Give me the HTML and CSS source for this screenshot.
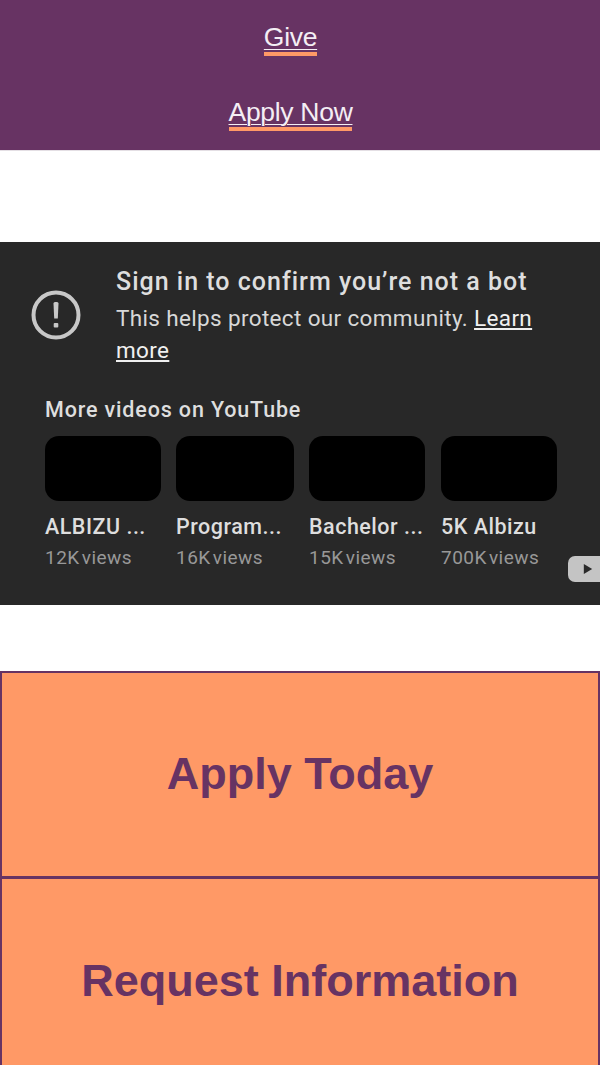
FILE: index.html
```html
<!DOCTYPE html>
<html lang="en">
<head>
    <meta charset="UTF-8">
    <meta name="viewport" content="width=device-width, initial-scale=1.0">
    <title>Albizu</title>
    <link rel="stylesheet" href="styles.css">
</head>
<body>
    <div class="top-links">
        <a class="top-link" href="#">Give</a>
        <a class="top-link" href="#">Apply Now</a>
    </div>

    <div class="video-box">
        <div class="bot-msg">
            <svg class="alert-icon" viewBox="0 0 50 50" aria-hidden="true">
                <circle cx="25" cy="25" r="22.5" fill="none" stroke="#c8c8c8" stroke-width="4"/>
                <path d="M22.5 13.5a1.5 1.5 0 0 1 1.5-1.5h2a1.5 1.5 0 0 1 1.5 1.5l-.7 15h-3.6z" fill="#c8c8c8"/>
                <rect x="22.7" y="33" width="4.6" height="4.6" rx="1" fill="#c8c8c8"/>
            </svg>
            <div class="bot-text">
                <p class="bot-title">Sign in to confirm you’re not a bot</p>
                <p class="bot-sub">This helps protect our community. <a href="#">Learn</a> <a href="#">more</a></p>
            </div>
        </div>

        <p class="more-title">More videos on YouTube</p>
        <div class="video-row">
            <div class="video-card">
                <div class="thumb"></div>
                <p class="video-name">ALBIZU ...</p>
                <p class="video-views">12K views</p>
            </div>
            <div class="video-card card-wide">
                <div class="thumb"></div>
                <p class="video-name">Program...</p>
                <p class="video-views">16K views</p>
            </div>
            <div class="video-card">
                <div class="thumb"></div>
                <p class="video-name">Bachelor ...</p>
                <p class="video-views">15K views</p>
            </div>
            <div class="video-card card-last">
                <div class="thumb"></div>
                <p class="video-name">5K Albizu</p>
                <p class="video-views">700K views</p>
            </div>
        </div>

        <div class="yt-mark">
            <svg viewBox="0 0 12 14" aria-hidden="true"><path d="M1 1l10 6-10 6z" fill="#2a2a2a"/></svg>
        </div>
    </div>

    <div class="cta-list">
        <a class="cta" href="#">Apply Today</a>
        <a class="cta" href="#">Request Information</a>
    </div>
</body>
</html>
```

FILE: styles.css
```css
html, body {
    height: 1065px;
    overflow: hidden;
}

body {
    margin: 0;
    font-family: "Liberation Sans", Arial, sans-serif;
    background-color: #fff;
}

p {
    margin: 0;
}

.top-links {
    background-color: #673363;
    height: 131px;
    border-bottom: 1px solid #e4dfe4;
    display: flex;
    flex-direction: column;
    align-items: center;
    padding: 19px 19px 0 0;
    gap: 38px;
}

.top-link {
    color: #f4eef4;
    font-size: 26.5px;
    line-height: 36px;
    letter-spacing: -0.3px;
    text-decoration: underline;
    text-decoration-thickness: 1px;
    text-underline-offset: 3px;
    border-bottom: 4px solid #ff9966;
    height: 33px;
}

.video-box {
    margin-top: 91px;
    background-color: #282828;
    height: 363px;
    position: relative;
    font-family: Roboto, sans-serif;
    color: #eee;
    padding: 0 0 0 45px;
    box-sizing: border-box;
}

.bot-msg {
    display: flex;
    align-items: flex-start;
    padding-top: 23px;
    margin-left: -14px;
}

.alert-icon {
    width: 50px;
    height: 50px;
    margin-top: 25px;
    margin-right: 35px;
    flex-shrink: 0;
}

.bot-text {
    width: 440px;
}

.bot-title {
    font-size: 25px;
    font-weight: 500;
    line-height: 33px;
    letter-spacing: 1px;
    color: #dedede;
}

.bot-sub {
    font-size: 22.5px;
    line-height: 32px;
    letter-spacing: 0.35px;
    margin-top: 4px;
    color: #d8d8d8;
}

.bot-sub a {
    color: #f0f0f0;
}

.more-title {
    font-size: 21.5px;
    font-weight: 500;
    line-height: 28px;
    letter-spacing: 0.85px;
    margin-top: 30px;
    color: #dedede;
}

.video-row {
    display: flex;
    gap: 15px;
    margin-top: 12px;
}

.video-card {
    width: 116px;
    flex-shrink: 0;
}

.card-wide {
    width: 118px;
}

.card-last {
    margin-left: 1px;
}

.thumb {
    height: 65px;
    background-color: #000;
    border-radius: 14px;
}

.video-name {
    font-size: 21.5px;
    font-weight: 500;
    line-height: 28px;
    letter-spacing: 0.5px;
    margin-top: 12px;
    white-space: nowrap;
    color: #dedede;
}

.video-views {
    font-size: 19px;
    line-height: 26px;
    letter-spacing: 0.45px;
    word-spacing: -3px;
    margin-top: 4px;
    color: #989898;
    white-space: nowrap;
}

.yt-mark {
    position: absolute;
    left: 568px;
    top: 314px;
    width: 40px;
    height: 26px;
    background-color: #c4c4c4;
    border-radius: 7px;
    display: flex;
    align-items: center;
    padding-left: 15px;
    box-sizing: border-box;
}

.yt-mark svg {
    width: 10px;
    height: 12px;
}

.cta-list {
    margin-top: 66px;
}

.cta {
    display: flex;
    align-items: center;
    justify-content: center;
    height: 207px;
    box-sizing: border-box;
    padding-bottom: 2px;
    background-color: #ff9966;
    border: 2px solid #673363;
    color: #673363;
    font-size: 45px;
    font-weight: bold;
    text-decoration: none;
}

.cta + .cta {
    margin-top: -1px;
    padding-bottom: 0;
}
```
